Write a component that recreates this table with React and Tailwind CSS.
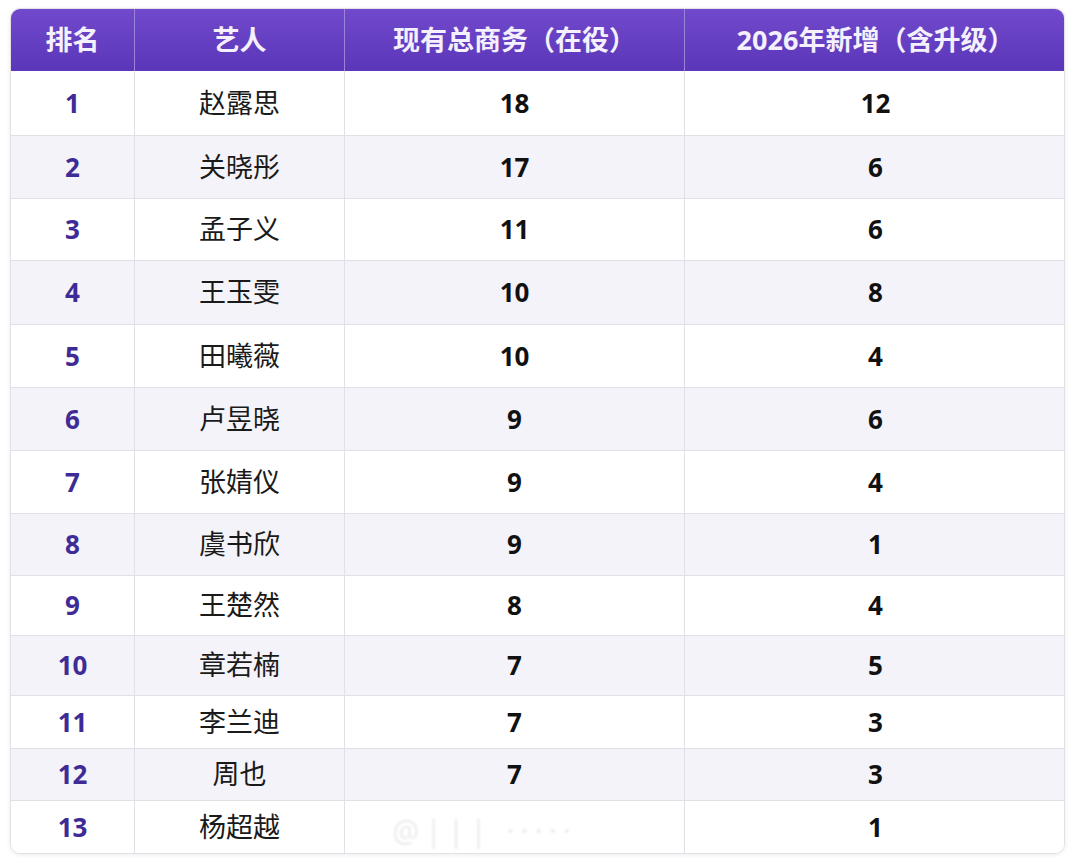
import React from 'react';

const rows = [
  { rank: 1, name: '赵露思', total: 18, added: 12, h: 'h-[64px]' },
  { rank: 2, name: '关晓彤', total: 17, added: 6, h: 'h-[63px]' },
  { rank: 3, name: '孟子义', total: 11, added: 6, h: 'h-[62px]' },
  { rank: 4, name: '王玉雯', total: 10, added: 8, h: 'h-[64px]' },
  { rank: 5, name: '田曦薇', total: 10, added: 4, h: 'h-[63px]' },
  { rank: 6, name: '卢昱晓', total: 9, added: 6, h: 'h-[63px]' },
  { rank: 7, name: '张婧仪', total: 9, added: 4, h: 'h-[63px]' },
  { rank: 8, name: '虞书欣', total: 9, added: 1, h: 'h-[62px]' },
  { rank: 9, name: '王楚然', total: 8, added: 4, h: 'h-[60px]' },
  { rank: 10, name: '章若楠', total: 7, added: 5, h: 'h-[60px]' },
  { rank: 11, name: '李兰迪', total: 7, added: 3, h: 'h-[53px]' },
  { rank: 12, name: '周也', total: 7, added: 3, h: 'h-[52px]' },
  { rank: 13, name: '杨超越', total: null, added: 1, h: 'h-[53px]' },
];

const cols = 'grid grid-cols-[124px_210px_340px_381px]';

export default function App() {
  return (
    <div className="min-h-[864px] w-[1080px] bg-white pt-[8px] pl-[10px] font-['Noto_Sans','Noto_Sans_CJK_SC',sans-serif]">
      <div className="w-[1055px] rounded-[10px] border border-[#e2e1e8] shadow-[0_1px_4px_rgba(0,0,0,0.08)] overflow-hidden">
        {/* header */}
        <div className={`${cols} h-[62px] bg-gradient-to-b from-[#7149cc] to-[#5b36b8] text-[#f4f0fd] text-[27px] font-bold`}>
          <div className="flex items-center justify-center border-r border-[#9a84da]">排名</div>
          <div className="flex items-center justify-center border-r border-[#9a84da]">艺人</div>
          <div className="flex items-center justify-center border-r border-[#9a84da]">现有总商务（在役）</div>
          <div className="flex items-center justify-center">2026年新增（含升级）</div>
        </div>

        {rows.map((r, i) => (
          <div
            key={r.rank}
            className={`${cols} ${r.h} ${i % 2 === 1 ? 'bg-[#f4f3f9]' : 'bg-white'} ${i > 0 ? 'border-t border-[#e1e0e7]' : ''} text-[26px]`}
          >
            <div className="flex items-center justify-center border-r border-[#e1e0e7] font-bold text-[#3e2b95]">{r.rank}</div>
            <div className="flex items-center justify-center border-r border-[#e1e0e7] text-[27px] text-[#1a1a1a]">{r.name}</div>
            <div className="flex items-center justify-center border-r border-[#e1e0e7] font-bold text-[#111]">
              {r.total ?? (
                <span className="ml-[-60px] mt-[6px] text-[30px] font-normal tracking-[6px] text-[#ececec] blur-[1px]">@||| ·····</span>
              )}
            </div>
            <div className="flex items-center justify-center font-bold text-[#111]">{r.added}</div>
          </div>
        ))}
      </div>
    </div>
  );
}
